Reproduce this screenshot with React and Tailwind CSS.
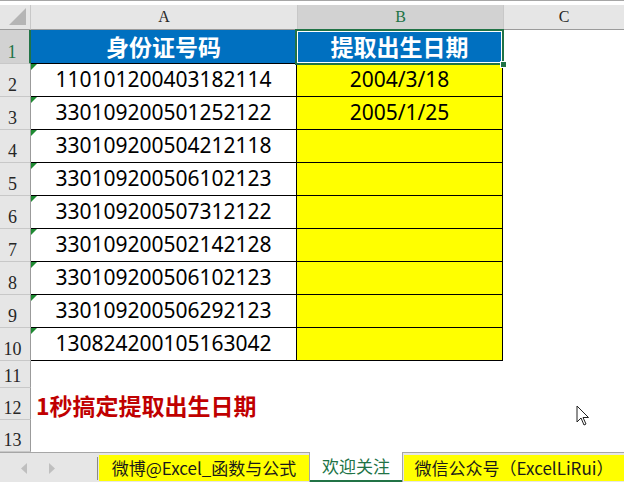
import React from "react";

const ids = [
  "110101200403182114",
  "330109200501252122",
  "330109200504212118",
  "330109200506102123",
  "330109200507312122",
  "330109200502142128",
  "330109200506102123",
  "330109200506292123",
  "130824200105163042",
];
const dates = ["2004/3/18", "2005/1/25", "", "", "", "", "", "", ""];

const sans = { fontFamily: '"Noto Sans", "Noto Sans CJK SC", sans-serif' };
const cjk = { fontFamily: '"Noto Sans CJK SC", "Noto Sans", sans-serif' };
const serif = { fontFamily: '"Liberation Serif", "DejaVu Serif", serif' };

function RowHead({ n, h, selected }) {
  return (
    <div
      className={
        "w-[31px] shrink-0 flex items-end justify-center pr-[5px] pb-[1px] text-[18px] leading-[20px] border-b border-[#c8c8c8] " +
        (selected
          ? "bg-[#d2d2d2] text-[#217346] border-r-2 border-r-[#217346]"
          : "bg-[#e6e6e6] text-[#262626] border-r border-r-[#9b9b9b]")
      }
      style={{ ...serif, height: h }}
    >
      {n}
    </div>
  );
}

function Tri() {
  return (
    <svg className="absolute left-0 top-0" width="6" height="6" viewBox="0 0 6 6">
      <polygon points="0,0 6,0 0,6" fill="#1e8a32" />
    </svg>
  );
}

export default function App() {
  return (
    <div className="w-[624px] h-[482px] bg-white overflow-hidden flex flex-col select-none">
      <div className="h-[1px] bg-[#a6a6a6] shrink-0" />
      <div className="h-[4px] bg-white shrink-0" />
      <div className="relative flex flex-col">
        {/* column header */}
        <div className="flex h-[25px] shrink-0">
          <div className="w-[31px] shrink-0 bg-[#e6e6e6] border-r border-[#c8c8c8] border-b border-b-[#9b9b9b] relative">
            <svg className="absolute left-[9px] top-[3px]" width="17" height="17" viewBox="0 0 17 17">
              <polygon points="17,0 17,17 0,17" fill="#b5b5b5" />
            </svg>
          </div>
          <div
            className="w-[267px] shrink-0 bg-[#e6e6e6] border-r border-[#c8c8c8] border-b border-b-[#9b9b9b] flex items-center justify-center text-[16px] text-[#262626]"
            style={serif}
          >
            A
          </div>
          <div
            className="w-[206px] shrink-0 bg-[#d2d2d2] border-r border-[#c8c8c8] border-b border-b-[#9b9b9b] flex items-center justify-center text-[16px] text-[#217346]"
            style={serif}
          >
            B
          </div>
          <div
            className="flex-1 bg-[#e6e6e6] border-b border-b-[#9b9b9b] flex items-center justify-center text-[16px] text-[#262626]"
            style={serif}
          >
            C
          </div>
        </div>

        {/* row 1 */}
        <div className="flex h-[34px] shrink-0">
          <RowHead n={1} h={34} selected />
          <div
            className="w-[266px] shrink-0 bg-[#0070c0] border-r border-b border-black flex items-center justify-center text-white font-bold text-[23px]"
            style={cjk}
          >
            身份证号码
          </div>
          <div
            className="w-[206px] shrink-0 bg-[#0070c0] border-r border-b border-black flex items-center justify-center text-white font-bold text-[23px]"
            style={cjk}
          >
            提取出生日期
          </div>
          <div className="flex-1 bg-white" />
        </div>

        {ids.map((id, i) => (
          <div key={i} className="flex h-[33px] shrink-0">
            <RowHead n={i + 2} h={33} />
            <div
              className="relative w-[266px] shrink-0 bg-white border-r border-b border-black flex items-center justify-center text-[21px] text-black"
              style={sans}
            >
              <Tri />
              {id}
            </div>
            <div
              className="w-[206px] shrink-0 bg-[#ffff00] border-r border-b border-black flex items-center justify-center text-[21px] text-black"
              style={sans}
            >
              {dates[i]}
            </div>
            <div className="flex-1 bg-white" />
          </div>
        ))}

        {/* row 11 */}
        <div className="flex h-[27px] shrink-0">
          <RowHead n={11} h={27} />
          <div className="flex-1 bg-white" />
        </div>
        {/* row 12 */}
        <div className="flex h-[32px] shrink-0">
          <RowHead n={12} h={32} />
          <div
            className="flex-1 bg-white flex items-center pl-[5px] pt-[3px] text-[23px] font-bold text-[#c00000]"
            style={cjk}
          >
            1秒搞定提取出生日期
          </div>
        </div>
        {/* row 13 */}
        <div className="flex h-[32px] shrink-0">
          <RowHead n={13} h={32} />
          <div className="flex-1 bg-white" />
        </div>

        {/* selection overlay B1 */}
        <div className="absolute left-[295px] top-[24px] w-[209px] h-[36px] border-2 border-[#217346] pointer-events-none">
          <div className="w-full h-full border border-white" />
          <div className="absolute right-[-5px] bottom-[-5px] w-[7px] h-[7px] bg-[#217346] border border-white" />
        </div>

        {/* mouse cursor */}
        <svg className="absolute left-[576px] top-[400px]" width="14" height="22" viewBox="0 0 14 22">
          <path
            d="M1 1 L1 17 L5 13 L8 20 L10 19 L7 12.5 L12.5 12.5 Z"
            fill="white"
            stroke="#222"
            strokeWidth="1"
            strokeLinejoin="round"
          />
        </svg>
      </div>

      {/* tab bar */}
      <div className="flex-1 bg-[#e6e6e6] border-t border-[#a6a6a6] flex items-stretch relative">
        <div className="w-[97px] shrink-0 flex items-center">
          <svg className="ml-[21px]" width="7" height="11" viewBox="0 0 7 11">
            <polygon points="6,0 6,11 0,5.5" fill="#bfbfbf" />
          </svg>
          <svg className="ml-[21px]" width="7" height="11" viewBox="0 0 7 11">
            <polygon points="0,0 0,11 6,5.5" fill="#bfbfbf" />
          </svg>
        </div>
        <div className="w-[1px] bg-[#8a8a8a] my-[4px] shrink-0" />
        <div className="ml-[1px] w-[210px] shrink-0 pt-[2px] pb-[3px]">
          <div
            className="h-full bg-[#ffff00] flex items-center justify-center text-[17px] text-[#1a1a1a]"
            style={cjk}
          >
            微博@Excel_函数与公式
          </div>
        </div>
        <div className="w-[94px] shrink-0 bg-white border-l border-r border-[#a6a6a6] flex flex-col -mt-[1px]">
          <div
            className="flex-1 flex items-center justify-center text-[17px] text-[#217346]"
            style={cjk}
          >
            欢迎关注
          </div>
          <div className="h-[2px] bg-[#217346] mb-[2px]" />
        </div>
        <div className="ml-[1px] flex-1 pt-[2px] pb-[3px]">
          <div
            className="h-full bg-[#ffff00] flex items-center justify-center text-[17px] text-[#1a1a1a]"
            style={cjk}
          >
            微信公众号（ExcelLiRui）
          </div>
        </div>
      </div>
    </div>
  );
}
